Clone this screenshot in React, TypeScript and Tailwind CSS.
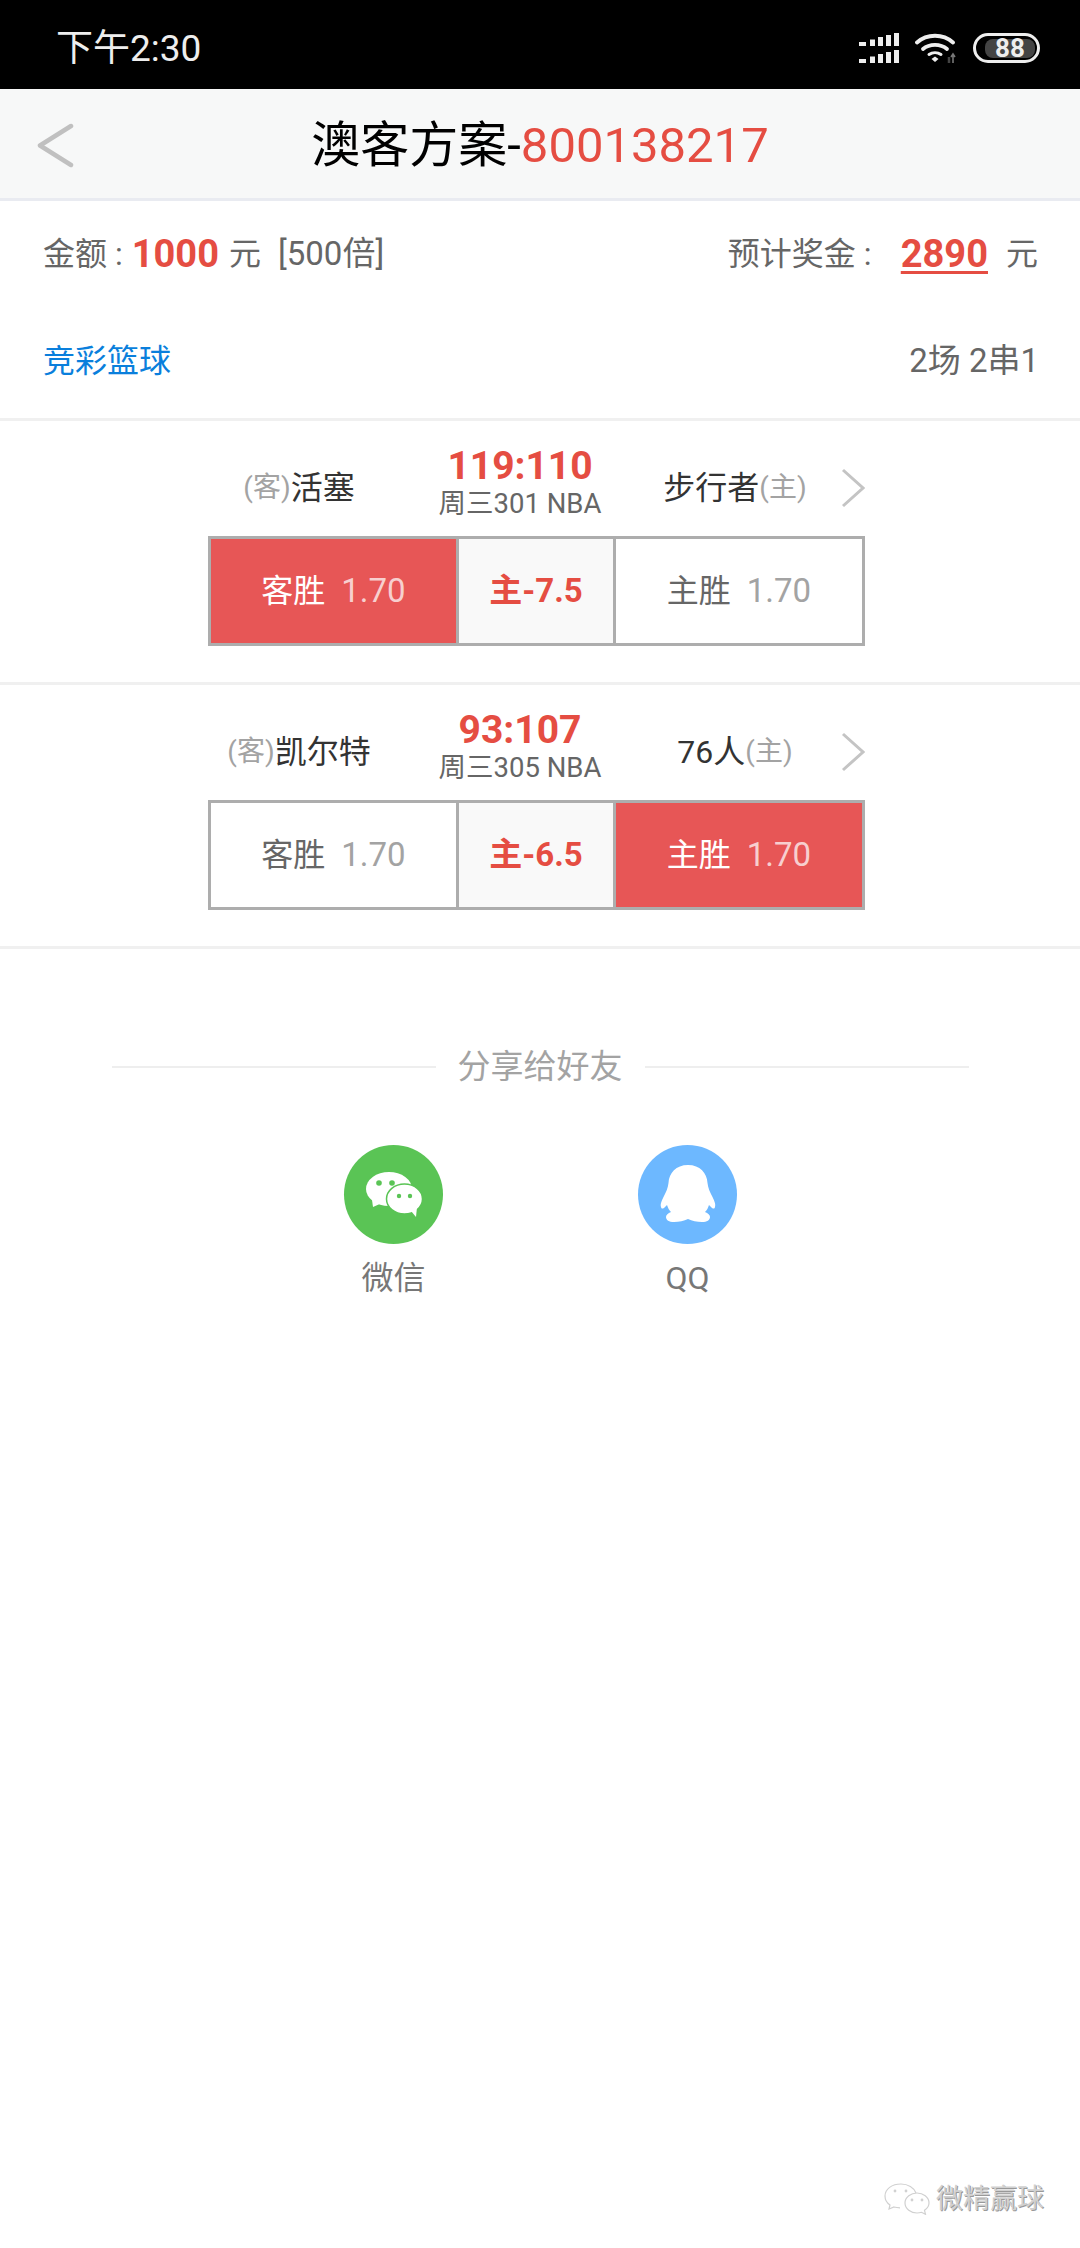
const FONT = "font-['Roboto','Noto_Sans_CJK_SC',sans-serif]";

function SignalIcon() {
  const bars = [
    [0, 7, 4],
    [11, 5, 6.5],
    [19, 5, 9],
    [27, 5, 11],
    [35, 5, 13],
  ];
  return (
    <svg width="40" height="30" viewBox="0 0 40 30" fill="#eeeeee">
      {[13, 30].map((bottom) =>
        bars.map(([x, w, h]) => <rect key={`${bottom}-${x}`} x={x} y={bottom - h} width={w} height={h} />),
      )}
    </svg>
  );
}

function WifiIcon() {
  return (
    <svg width="42" height="30" viewBox="0 0 42 30" fill="none">
      <path d="M2 9.500C12 .5 28 .5 38 9.500" stroke="#eeeeee" strokeWidth="3.800" strokeLinecap="round" />
      <path d="M8 16C14.500 10.500 25.500 10.500 32 16" stroke="#eeeeee" strokeWidth="3.800" strokeLinecap="round" />
      <path d="M14 21.500C17.500 19 22.500 19 26 21.500" stroke="#eeeeee" strokeWidth="3" strokeLinecap="round" />
      <path d="M16.500 26L20 23.500L23.500 26L20 29Z" fill="#eeeeee" />
      <path d="M38 30V21M36 24L38 21L40 24" stroke="#777777" strokeWidth="1.600" />
      <path d="M34 30V24" stroke="#444444" strokeWidth="2.500" />
    </svg>
  );
}

function WeChatGlyph() {
  return (
    <svg width="99" height="99" viewBox="0 0 99 99">
      <ellipse cx="45" cy="44" rx="23" ry="17" fill="#ffffff" />
      <path d="M28 55L29 62L38 58Z" fill="#ffffff" />
      <circle cx="35" cy="38" r="2.800" fill="#5ac455" />
      <circle cx="48" cy="38" r="2.800" fill="#5ac455" />
      <ellipse cx="60.500" cy="54" rx="18" ry="15" fill="#ffffff" stroke="#5ac455" strokeWidth="1.500" />
      <path d="M67 66L72 72L73 62Z" fill="#ffffff" />
      <circle cx="55" cy="51" r="2.200" fill="#5ac455" />
      <circle cx="66" cy="51" r="2.200" fill="#5ac455" />
    </svg>
  );
}

function QQGlyph() {
  return (
    <svg width="99" height="99" viewBox="0 0 99 99" fill="#ffffff">
      <path d="M50 20C38 20 31 28 30.500 38C30 43 28 47 26 51C24 55 22 59 23 62C23.500 64 25 64 27 62L29 60C30 63 31 65 33 67C30 68 28 70 28 72C28 75 31 77 36 77C41 77 46 76 50 74C54 76 59 77 64 77C69 77 72 75 72 72C72 70 70 68 67 67C69 65 70 63 71 60L73 62C75 64 76.500 64 77 62C78 59 76 55 74 51C72 47 70 43 69.500 38C69 28 62 20 50 20Z" />
    </svg>
  );
}

function Team({ tag, name, tagFirst }: { tag: string; name: string; tagFirst: boolean }) {
  return (
    <div className="flex items-center justify-center">
      {tagFirst && <span className="text-[28px] text-[#a3a3a3]">{tag}</span>}
      <span className="text-[32px] text-[#333333]">{name}</span>
      {!tagFirst && <span className="text-[28px] text-[#a3a3a3]">{tag}</span>}
    </div>
  );
}

function Odds({ label, on, width }: { label: string; on: boolean; width: string }) {
  return (
    <div className={`flex items-center justify-center gap-4 ${width} ${on ? "bg-[#e75656] text-white" : "bg-white text-[#666666]"}`}>
      <span className="text-[32px]">{label}</span>
      <span className={`text-[33px] ${on ? "text-[#f7cfcf]" : "text-[#a3a3a3]"}`}>1.70</span>
    </div>
  );
}

function MatchRow({
  away,
  home,
  score,
  info,
  handicap,
  winner,
}: {
  away: string;
  home: string;
  score: string;
  info: string;
  handicap: string;
  winner: "away" | "home";
}) {
  return (
    <section className="h-[264px] border-b-[3px] border-[#f0f0f0] pt-[22px]">
      <div className="flex h-[90px] items-center pl-[190px]">
        <div className="w-[218px]">
          <Team tag="(客)" name={away} tagFirst />
        </div>
        <div className="mb-[12px] flex w-[224px] flex-col items-center">
          <span className="text-[39px] leading-[44px] font-bold text-[#e54d42]">{score}</span>
          <span className="text-[27.5px] leading-[32px] text-[#666666]">{info}</span>
        </div>
        <div className="w-[206px]">
          <Team tag="(主)" name={home} tagFirst={false} />
        </div>
        <svg width="24" height="40" viewBox="0 0 24 40" fill="none" className="ml-[3px]">
          <path d="M2 2L22 20L2 38" stroke="#c4c4c4" strokeWidth="3" />
        </svg>
      </div>
      <div className="mx-[208px] mt-[3px] flex h-[110px] w-[657px] border-[3px] border-[#adadad]">
        <Odds label="客胜" on={winner === "away"} width="w-[245px]" />
        <div className="flex w-[160px] items-center justify-center border-x-[3px] border-[#adadad] bg-[#f9f9f9] text-[33px] font-bold text-[#e54d42]">
          {handicap}
        </div>
        <Odds label="主胜" on={winner === "home"} width="flex-1" />
      </div>
    </section>
  );
}

export default function App() {
  return (
    <div className={`${FONT} relative h-[2248px] w-[1080px] overflow-hidden bg-white`}>
      {/* status bar */}
      <div className="flex h-[89px] items-center justify-between bg-black pt-[7px] pr-[40px] pl-[56px] text-[#eeeeee]">
        <span className="text-[37px] leading-none">下午2:30</span>
        <div className="flex items-center gap-[16px]">
          <SignalIcon />
          <WifiIcon />
          <div className="flex h-[30px] w-[67px] items-center justify-end rounded-full border-[3px] border-[#eeeeee] py-[2px] pr-[2px]">
            <div className="flex h-[19px] w-[50px] items-center justify-center rounded-[8px] bg-[#444444] text-[26px] leading-none font-bold text-[#eeeeee]">
              88
            </div>
          </div>
        </div>
      </div>

      {/* header */}
      <header className="relative flex h-[112px] items-center justify-center border-b-[3px] border-[#e9ebf1] bg-[#f7f8f8] pt-[4px]">
        <svg width="38" height="45" viewBox="0 0 38 45" fill="none" className="absolute top-[34px] left-[37px]">
          <path d="M34 3L3 22.500L34 42" stroke="#c0c0c0" strokeWidth="4.500" strokeLinecap="round" strokeLinejoin="round" />
        </svg>
        <h1 className="text-[49px] font-normal text-black">
          澳客方案-<span className="text-[#e54d42]">800138217</span>
        </h1>
      </header>

      {/* summary */}
      <div className="flex h-[106px] items-center justify-between pr-[42px] pl-[43px] text-[32px] text-[#666666]">
        <div className="flex items-center">
          <span>金额</span>
          <span className="mr-[9px] ml-[8px]">:</span>
          <span className="text-[38px] font-bold text-[#e54d42]">1000</span>
          <span className="ml-[10px]">元</span>
          <span className="ml-[17px] text-[33px]">[500倍]</span>
        </div>
        <div className="flex items-center">
          <span>预计奖金</span>
          <span className="ml-[8px] w-[37px]">:</span>
          <span className="text-[38px] font-bold text-[#e54d42] underline underline-offset-[4px]">2890</span>
          <span className="ml-[18px]">元</span>
        </div>
      </div>
      <div className="flex h-[114px] items-center justify-between border-b-[3px] border-[#f0f0f0] pr-[41px] pb-[3px] pl-[43px]">
        <span className="text-[32px] text-[#0a7fdc]">竞彩篮球</span>
        <span className="text-[33px] text-[#666666]">2场 2串1</span>
      </div>

      <MatchRow away="活塞" home="步行者" score="119:110" info="周三301 NBA" handicap="主-7.5" winner="away" />
      <MatchRow away="凯尔特" home="76人" score="93:107" info="周三305 NBA" handicap="主-6.5" winner="home" />

      {/* share */}
      <div className="mt-[98px] flex h-[40px] items-center justify-center">
        <div className="h-[2px] w-[324px] bg-[#eeeeee]" />
        <span className="mx-[22px] text-[33px] text-[#a3a3a3]">分享给好友</span>
        <div className="h-[2px] w-[324px] bg-[#eeeeee]" />
      </div>
      <div className="mt-[58px] flex pl-[344px]">
        <div className="flex w-[99px] flex-col items-center">
          <div className="h-[99px] w-[99px] rounded-full bg-[#5ac455]">
            <WeChatGlyph />
          </div>
          <span className="mt-[14px] text-[32px] leading-[40px] text-[#777777]">微信</span>
        </div>
        <div className="ml-[195px] flex w-[99px] flex-col items-center">
          <div className="h-[99px] w-[99px] rounded-full bg-[#6db8ff]">
            <QQGlyph />
          </div>
          <span className="mt-[14px] text-[32px] leading-[40px] text-[#777777]">QQ</span>
        </div>
      </div>

      {/* watermark */}
      <div className="absolute right-[36px] bottom-[29px] flex items-center gap-[6px]">
        <svg width="46" height="32" viewBox="0 0 46 32" fill="none" stroke="#d0d0d0" strokeWidth="1.200">
          <path d="M17 1C8 1 1 6 1 13c0 4 2 7 5 9l-1 4 5-2c2 .6 4 .8 6 .8" fill="#ffffff" />
          <path d="M17 1c7 0 13 3.500 15 9" />
          <path d="M45 20c0-6-6-10-12-10s-12 4-12 10 6 10 12 10c1.500 0 3-.2 4.500-.7l4 2-1-4c2.700-1.800 4.500-4.300 4.500-7.300z" fill="#ffffff" />
          <circle cx="11" cy="8" r=".8" />
          <circle cx="22" cy="8" r=".8" />
          <circle cx="28" cy="17" r=".8" />
          <circle cx="38" cy="17" r=".8" />
        </svg>
        <span className="text-[27px] text-[#d0d0d0] [text-shadow:1px_1px_0_#999999]">微精赢球</span>
      </div>
    </div>
  );
}
